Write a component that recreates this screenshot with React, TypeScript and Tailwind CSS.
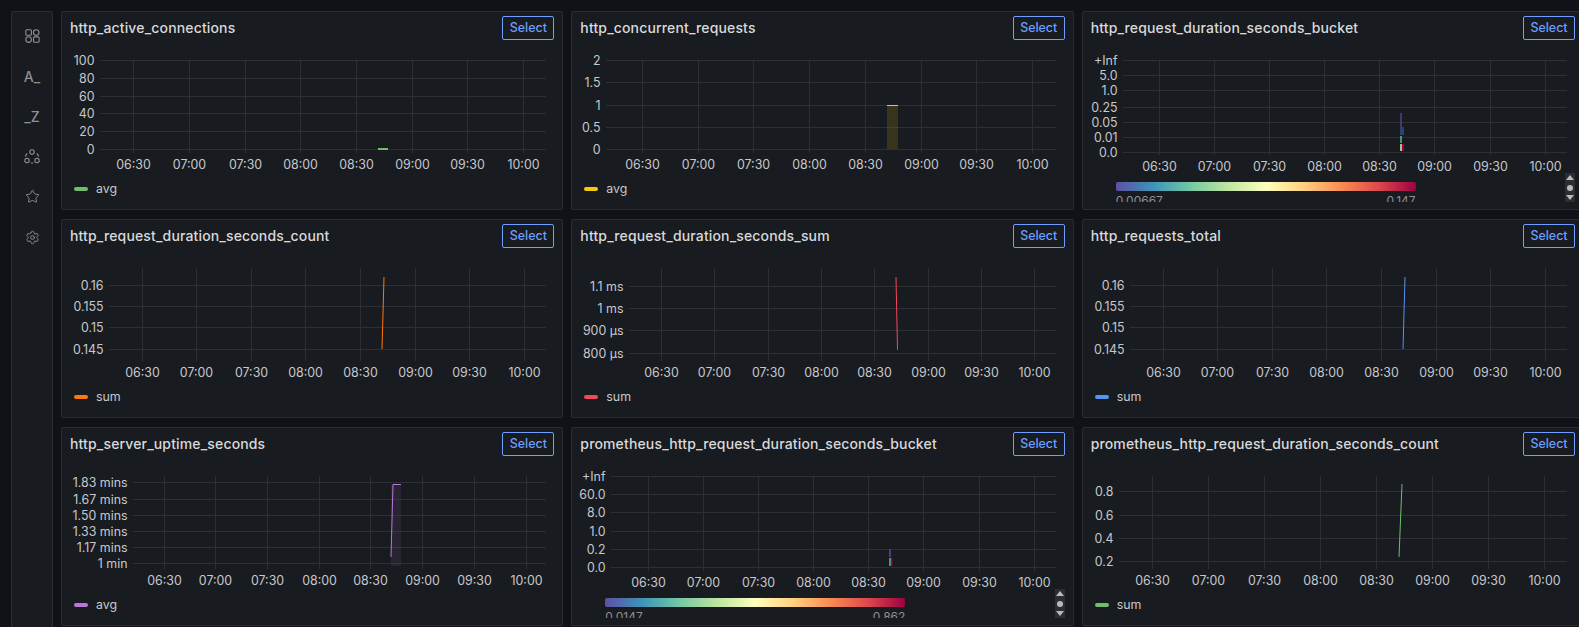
import React from 'react';
import { Star, Settings } from 'lucide-react';

const times = ['06:30', '07:00', '07:30', '08:00', '08:30', '09:00', '09:30', '10:00'];

type PanelData = {
  title: string;
  yLabels: string[];
  yLines: number[];
  xLines: number[];
  xStart: number;
  timeY: number;
  legend?: { label: string; color: string };
  heat?: { min: string; max: string };
  mark: React.ReactNode;
};

// all chart coordinates are relative to the panel's top left corner
const panels: PanelData[] = [
  {
    title: 'http_active_connections',
    yLabels: ['100', '80', '60', '40', '20', '0'],
    yLines: [49, 67, 85, 102, 120, 138],
    xLines: [72, 128, 184, 239, 295, 351, 406, 462],
    xStart: 39,
    timeY: 153,
    legend: { label: 'avg', color: '#73bf69' },
    mark: <rect x="317" y="137" width="10" height="2" fill="#73bf69" />,
  },
  {
    title: 'http_concurrent_requests',
    yLabels: ['2', '1.5', '1', '0.5', '0'],
    yLines: [49, 71, 94, 116, 138],
    xLines: [71, 127, 182, 238, 294, 350, 405, 461],
    xStart: 35,
    timeY: 153,
    legend: { label: 'avg', color: '#f2cc0c' },
    mark: (
      <g>
        <rect x="316" y="94" width="11" height="44" fill="#f2cc0c" fillOpacity="0.14" />
        <line x1="316" y1="94.5" x2="327" y2="94.5" stroke="#f2cc0c" />
      </g>
    ),
  },
  {
    title: 'http_request_duration_seconds_bucket',
    yLabels: ['+Inf', '5.0', '1.0', '0.25', '0.05', '0.01', '0.0'],
    yLines: [49, 64, 79, 96, 111, 126, 141],
    xLines: [77, 132, 187, 242, 297, 352, 408, 463],
    xStart: 41,
    timeY: 155,
    heat: { min: '0.00667', max: '0.147' },
    mark: (
      <g>
        <rect x="318" y="102" width="2" height="14" fill="#5e4fa2" fillOpacity="0.6" />
        <rect x="318" y="116" width="4" height="8" fill="#3f5c9f" fillOpacity="0.6" />
        <rect x="318" y="125" width="2" height="7" fill="#66c2a5" fillOpacity="0.7" />
        <rect x="318" y="133" width="2" height="7" fill="#e6f598" fillOpacity="0.75" />
        <rect x="320" y="133" width="2" height="7" fill="#9e0142" />
      </g>
    ),
  },
  {
    title: 'http_request_duration_seconds_count',
    yLabels: ['0.16', '0.155', '0.15', '0.145'],
    yLines: [66, 87, 108, 130],
    xLines: [81, 135, 190, 244, 299, 354, 408, 463],
    xStart: 48,
    timeY: 153,
    legend: { label: 'sum', color: '#ff780a' },
    mark: <line x1="321" y1="130" x2="323" y2="58" stroke="#ff780a" />,
  },
  {
    title: 'http_request_duration_seconds_sum',
    yLabels: ['1.1 ms', '1 ms', '900 µs', '800 µs'],
    yLines: [67, 89, 111, 134],
    xLines: [90, 143, 197, 250, 303, 357, 410, 463],
    xStart: 58,
    timeY: 153,
    legend: { label: 'sum', color: '#f2495c' },
    mark: <line x1="325" y1="58" x2="326.5" y2="131" stroke="#f2495c" />,
  },
  {
    title: 'http_requests_total',
    yLabels: ['0.16', '0.155', '0.15', '0.145'],
    yLines: [66, 87, 108, 130],
    xLines: [81, 135, 190, 244, 299, 354, 408, 463],
    xStart: 48,
    timeY: 153,
    legend: { label: 'sum', color: '#5794f2' },
    mark: <line x1="321" y1="130" x2="323" y2="58" stroke="#5794f2" />,
  },
  {
    title: 'http_server_uptime_seconds',
    yLabels: ['1.83 mins', '1.67 mins', '1.50 mins', '1.33 mins', '1.17 mins', '1 min'],
    yLines: [55, 72, 88, 104, 120, 136],
    xLines: [103, 154, 206, 258, 309, 361, 413, 465],
    xStart: 72,
    timeY: 153,
    legend: { label: 'avg', color: '#b877d9' },
    mark: (
      <g>
        <rect x="330" y="57" width="10" height="82" fill="#b877d9" fillOpacity="0.1" />
        <polyline points="330,130 332,57.5 340,57.5" fill="none" stroke="#b877d9" />
      </g>
    ),
  },
  {
    title: 'prometheus_http_request_duration_seconds_bucket',
    yLabels: ['+Inf', '60.0', '8.0', '1.0', '0.2', '0.0'],
    yLines: [49, 67, 85, 104, 122, 140],
    xLines: [77, 132, 187, 242, 297, 352, 408, 463],
    xStart: 40,
    timeY: 155,
    heat: { min: '0.0147', max: '0.862' },
    mark: (
      <g>
        <rect x="318" y="122" width="2" height="8" fill="#5e4fa2" fillOpacity="0.7" />
        <rect x="318" y="131" width="2" height="8" fill="#66c2a5" fillOpacity="0.7" />
        <rect x="320" y="131" width="1.5" height="8" fill="#9e0142" />
      </g>
    ),
  },
  {
    title: 'prometheus_http_request_duration_seconds_count',
    yLabels: ['0.8', '0.6', '0.4', '0.2'],
    yLines: [64, 88, 111, 134],
    xLines: [70, 126, 182, 238, 294, 350, 406, 462],
    xStart: 37,
    timeY: 153,
    legend: { label: 'sum', color: '#73bf69' },
    mark: <line x1="317" y1="130" x2="320" y2="57" stroke="#73bf69" />,
  },
];

function Chart({ panel }: { panel: PanelData }) {
  const bottom = panel.timeY - 11;
  return (
    <svg viewBox="1 36 500 130" width="500" height="130" className="block shrink-0 text-[12.4px]">
      {panel.yLines.map((y) => (
        <line key={y} x1={panel.xStart} x2={485} y1={y + 0.5} y2={y + 0.5} stroke="#2d2f34" />
      ))}
      {panel.xLines.map((x) => (
        <line key={x} x1={x + 0.5} x2={x + 0.5} y1={49} y2={bottom} stroke="#2d2f34" />
      ))}
      {panel.yLabels.map((label, i) => (
        <text key={label} x={panel.xStart - 5.5} y={panel.yLines[i] + 5} textAnchor="end" fill="#c6c8ce">
          {label}
        </text>
      ))}
      {panel.xLines.map((x, i) => (
        <text key={times[i]} x={x + 0.5} y={panel.timeY + 4.5} textAnchor="middle" fill="#c6c8ce">
          {times[i]}
        </text>
      ))}
      {panel.mark}
    </svg>
  );
}

function HeatLegend({ heat }: { heat: NonNullable<PanelData['heat']> }) {
  return (
    <div className="ml-[33px] mt-[5px] h-[20px] w-[300px] overflow-hidden">
      <div className="h-[9px] rounded-[2px] bg-[linear-gradient(to_right,#5e4fa2,#3d95b8,#75c8a4,#bee5a0,#fdfebd,#fed27f,#f88d51,#dc494c,#9e0142)]" />
      <div className="mt-[2px] flex justify-between text-[12px] leading-[15px] text-[#8e8f94]">
        <span>{heat.min}</span>
        <span>{heat.max}</span>
      </div>
    </div>
  );
}

function Panel({ panel }: { panel: PanelData }) {
  return (
    <div className="relative flex h-[199px] flex-col overflow-hidden rounded-[2px] border border-[#2a2c30] bg-[#181b1f]">
      <div className="flex h-[35px] shrink-0 items-start justify-between pl-[8px] pr-[8px] pt-[4px]">
        <h2 className="mt-[2px] text-[14px] font-medium leading-[20px] tracking-[0.15px] text-[#d8d9da]">{panel.title}</h2>
        <button className="h-[24px] w-[52px] rounded-[2px] border border-[#6e9fff] text-[12.4px] font-medium text-[#6e9fff]">
          Select
        </button>
      </div>
      <Chart panel={panel} />
      {panel.legend && (
        <div className="mt-[4px] flex items-center gap-[8px] pl-[12px] text-[12.4px] leading-[16px] text-[#c6c8ce]">
          <span className="h-[4px] w-[14px] rounded-[2px]" style={{ backgroundColor: panel.legend.color }} />
          {panel.legend.label}
        </div>
      )}
      {panel.heat && <HeatLegend heat={panel.heat} />}
      {panel.heat && (
        <div className="absolute right-[8px] top-[161px] flex h-[29px] w-[10px] flex-col items-center justify-between bg-[#2d2e32] py-[2px] text-[#b9babd]">
          <span className="h-0 w-0 border-x-[4px] border-b-[5px] border-x-transparent border-b-current" />
          <span className="h-[6px] w-[6px] rounded-full bg-current" />
          <span className="h-0 w-0 border-x-[4px] border-t-[5px] border-x-transparent border-t-current" />
        </div>
      )}
    </div>
  );
}

function NavItem({ children }: { children: React.ReactNode }) {
  return <div className="flex h-[40.2px] items-center justify-center">{children}</div>;
}

export default function App() {
  return (
    <div className="flex h-[627px] w-[1579px] items-start gap-[8px] overflow-hidden bg-[#111217] pl-[11px] pt-[11px] font-['Inter'] text-[#8f9095]">
      <aside className="h-[640px] w-[42px] shrink-0 rounded-[2px] border border-[#2a2c30] bg-[#181b1f] pt-[4px]">
        <NavItem>
          <svg viewBox="0 0 15 14" className="h-[14px] w-[15px]" fill="none" stroke="currentColor" strokeWidth="1.1">
            <rect x="0.8" y="0.8" width="5.6" height="5.4" rx="1" />
            <circle cx="11.2" cy="3.5" r="2.8" />
            <circle cx="3.6" cy="10.6" r="2.8" />
            <rect x="8.5" y="7.9" width="5.6" height="5.4" rx="1" />
          </svg>
        </NavItem>
        <NavItem>
          <span className="pt-[1px] text-[14px] font-medium leading-[20px]">A_</span>
        </NavItem>
        <NavItem>
          <span className="pt-[1px] text-[14px] font-medium leading-[20px]">_Z</span>
        </NavItem>
        <NavItem>
          <svg viewBox="0 0 16 15" className="h-[15px] w-[16px]" fill="none" stroke="currentColor" strokeWidth="1.1">
            <circle cx="8" cy="3" r="2.2" />
            <circle cx="3" cy="11.5" r="2.2" />
            <circle cx="13" cy="11.5" r="2.2" />
            <path d="M1.3 7.5a6 6 0 0 1 2-3M12.7 4.5a6 6 0 0 1 2 3M6.8 14h2.4" />
          </svg>
        </NavItem>
        <NavItem>
          <Star className="h-[15px] w-[15px]" strokeWidth={1.5} />
        </NavItem>
        <NavItem>
          <Settings className="h-[15px] w-[15px]" strokeWidth={1.5} />
        </NavItem>
      </aside>
      <main className="grid w-[1523px] shrink-0 grid-cols-3 gap-x-[8px] gap-y-[9px]">
        {panels.map((panel) => (
          <Panel key={panel.title} panel={panel} />
        ))}
      </main>
    </div>
  );
}
